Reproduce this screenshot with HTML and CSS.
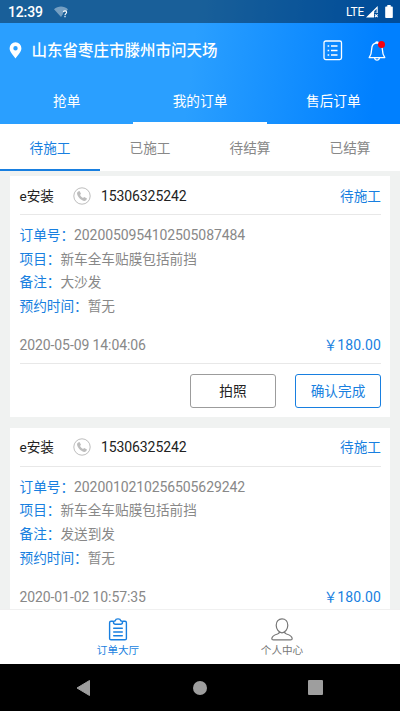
FILE: index.html
```html
<!DOCTYPE html>
<html lang="zh-CN">
<head>
<meta charset="utf-8">
<meta name="viewport" content="width=device-width, initial-scale=1">
<title>我的订单</title>
<link rel="stylesheet" href="styles.css">
</head>
<body>
<div class="app">
  <div class="top">
    <div class="status">
      <span class="clock">12:39</span>
      <svg class="wifi" width="15" height="13" viewBox="0 0 15 13"><path d="M0 3.2C4-.4 10-.4 14 3.2L12.2 5.4C10 4.4 8.6 5.6 9 8L7 11Z" fill="#fff" fill-opacity=".4"/><path d="M9.3 6.2c.2-1.7 3.3-1.8 3.3.1 0 1.3-1.6 1.3-1.6 2.9M11 10v1.3" fill="none" stroke="#fff" stroke-width="1.2"/></svg>
      <span class="lte">LTE</span>
      <svg class="signal" width="13" height="12" viewBox="0 0 13 12"><path d="M0 11.5 11.7 0v7H8v4.5Z" fill="#fff" /><path d="M8 5.4 10.6 2.8v4H8Z" fill="#0b569e"/><path d="m8.9 8.3 2.8 2.9m0-2.9-2.8 2.9" stroke="#fff" stroke-width="1.1"/></svg>
      <svg class="battery" width="8" height="14" viewBox="0 0 8 14"><path d="M2.3 0h3.4v1.5H7q.8 0 .8.8v9.9q0 .8-.8.8H1q-.8 0-.8-.8V2.3q0-.8.8-.8h1.3Z" fill="#fff"/></svg>
    </div>
    <div class="location">
      <svg class="pin" width="13" height="17" viewBox="0 0 12 17"><path fill-rule="evenodd" d="M6 .3A5.9 5.9 0 0 1 11.9 6.2C11.9 10 8.3 13.2 6 16.4 3.7 13.2.1 10 .1 6.2A5.9 5.9 0 0 1 6 .3ZM6 4A2.2 2.2 0 1 0 6 8.4 2.2 2.2 0 1 0 6 4Z" fill="#fff"/></svg>
      <h1>山东省枣庄市滕州市问天场</h1>
      <svg class="list" width="20" height="21" viewBox="0 0 20 21" fill="none" stroke="#fff" stroke-width="1.3"><rect x="1" y="1" width="17.5" height="18.6" rx="1.8"/><path d="M8 6h6.5M8 10.5h6.5M8 15h6.5M4.6 6h1.6M4.6 10.5h1.6M4.6 15h1.6"/></svg>
      <span class="bell">
        <svg width="18" height="20" viewBox="0 0 18 20" fill="none" stroke="#fff" stroke-width="1.3" stroke-linejoin="round"><path d="M9 2C5.6 2 3.8 4.7 3.7 8 3.6 12 3 14 1.2 16.6H16.8C15 14 14.4 12 14.3 8 14.2 4.7 12.4 2 9 2ZM7.6 2.1Q7.7.8 9 .8T10.4 2.1M6.6 17Q7 19.2 9 19.2T11.4 17"/></svg>
        <i></i>
      </span>
    </div>
    <nav class="tabs">
      <a>抢单</a><a class="on">我的订单</a><a>售后订单</a>
    </nav>
  </div>
  <nav class="filters">
    <a class="on">待施工</a><a>已施工</a><a>待结算</a><a>已结算</a>
  </nav>
  <main class="orders">
    <article class="card">
      <header class="head">
        <span class="name">e安装</span>
        <svg class="phone" width="18" height="18" viewBox="0 0 18 18"><circle cx="9" cy="9" r="8.2" fill="none" stroke="#bdbdbd"/><path d="M5.2 4.6 6.5 4 8 6.8 7 8Q8 10 10 11.1L11.2 10 14 11.6Q13.6 13.8 11.6 13.9C8 13.5 4.2 9.5 4 6.2Q4.1 5.2 5.2 4.6Z" fill="#bdbdbd"/></svg>
        <span class="num">15306325242</span>
        <span class="state">待施工</span>
      </header>
      <dl class="info">
        <div><dt>订单号：</dt><dd class="num">2020050954102505087484</dd></div>
        <div><dt>项目：</dt><dd>新车全车贴膜包括前挡</dd></div>
        <div><dt>备注：</dt><dd>大沙发</dd></div>
        <div><dt>预约时间：</dt><dd>暂无</dd></div>
      </dl>
      <div class="sum"><time class="num">2020-05-09 14:04:06</time><span class="price"><span>￥</span><span class="num">180.00</span></span></div>
      <div class="actions"><button>拍照</button><button class="primary">确认完成</button></div>
    </article>
    <article class="card">
      <header class="head">
        <span class="name">e安装</span>
        <svg class="phone" width="18" height="18" viewBox="0 0 18 18"><circle cx="9" cy="9" r="8.2" fill="none" stroke="#bdbdbd"/><path d="M5.2 4.6 6.5 4 8 6.8 7 8Q8 10 10 11.1L11.2 10 14 11.6Q13.6 13.8 11.6 13.9C8 13.5 4.2 9.5 4 6.2Q4.1 5.2 5.2 4.6Z" fill="#bdbdbd"/></svg>
        <span class="num">15306325242</span>
        <span class="state">待施工</span>
      </header>
      <dl class="info">
        <div><dt>订单号：</dt><dd class="num">2020010210256505629242</dd></div>
        <div><dt>项目：</dt><dd>新车全车贴膜包括前挡</dd></div>
        <div><dt>备注：</dt><dd>发送到发</dd></div>
        <div><dt>预约时间：</dt><dd>暂无</dd></div>
      </dl>
      <div class="sum"><time class="num">2020-01-02 10:57:35</time><span class="price"><span>￥</span><span class="num">180.00</span></span></div>
    </article>
  </main>
  <nav class="bottom">
    <a class="on">
      <svg width="20" height="23" viewBox="0 0 20 23" fill="none" stroke="currentColor" stroke-width="1.4" stroke-linejoin="round" stroke-linecap="round"><path d="M5 3.3H3Q1.6 3.3 1.6 4.7V20.4Q1.6 21.8 3 21.8H17Q18.4 21.8 18.4 20.4V4.7Q18.4 3.3 17 3.3H15M5.5 4.2Q5.5 3 7.2 2.8 7.6.9 10 .9T12.8 2.8Q14.5 3 14.5 4.2 14.5 6.2 12.5 6.2H7.5Q5.5 6.2 5.5 4.2ZM5.7 10.2h8.6M5.7 14h8.6M5.7 17.8h8.6"/></svg>
      <span>订单大厅</span>
    </a>
    <a>
      <svg width="22" height="23" viewBox="0 0 22 23" fill="none" stroke="currentColor" stroke-width="1.2" stroke-linejoin="round"><path d="M11 .9C14.5.9 16.8 3.5 16.8 7.2 16.8 11 14.2 14.8 11 14.8S5.2 11 5.2 7.2C5.2 3.5 7.5.9 11 .9ZM8.3 14Q8.5 15.2 6.5 16 1 17.6.8 20.7.8 21.7 2.5 21.9H19.5Q21.2 21.7 21.2 20.7 21 17.6 15.5 16 13.5 15.2 13.7 14"/></svg>
      <span>个人中心</span>
    </a>
  </nav>
  <div class="system">
    <svg width="15" height="16" viewBox="0 0 14 16"><path d="M.5 8 13 .5v15Z" fill="#9e9e9e" stroke="#9e9e9e" stroke-linejoin="round"/></svg>
    <i class="home"></i>
    <i class="recent"></i>
  </div>
</div>
</body>
</html>
```

FILE: styles.css
```css
* { box-sizing: border-box; }
body, h1, dl, dd { margin: 0; }
body {
  font-family: Roboto, "Noto Sans CJK SC", sans-serif;
  font-size: 13.65px;
  line-height: 20px;
  color: #222;
}
svg { display: block; flex: none; }
.app {
  width: 400px;
  height: 711px;
  display: flex;
  flex-direction: column;
  overflow: hidden;
  background: #f0f2f1;
}
.num { font-size: 14px; letter-spacing: -.1px; }

.top {
  flex: none;
  height: 124px;
  color: #fff;
  background: linear-gradient(97deg, #2a9fff 48%, #0080ff 93%);
}
.status {
  height: 23px;
  display: flex;
  align-items: center;
  padding: 0 7px 0 8px;
  background: rgba(0, 0, 0, .4);
}
.clock { font-size: 14px; font-weight: 500; letter-spacing: -.15px; padding-top: 1px; }
.wifi { margin: 1px 0 0 11px; }
.lte { margin-left: auto; font-size: 12px; letter-spacing: -.3px; }
.signal { margin-left: 2px; }
.battery { margin-left: 6px; }
.location { height: 55px; display: flex; align-items: center; padding: 0 14px 0 9px; }
.location h1 { margin-left: 9.5px; font-size: 15.5px; font-weight: 500; }
.list { margin-left: auto; }
.bell { position: relative; margin-left: 25px; }
.bell i {
  position: absolute;
  top: 0;
  right: 1px;
  width: 7px;
  height: 7px;
  border-radius: 50%;
  background: #f5000f;
}
.tabs { display: grid; grid-template-columns: repeat(3, 1fr); height: 46px; }
.tabs a { text-align: center; line-height: 46px; height: 46px; }
.tabs .on { border-bottom: 2px solid #fff; }

.filters {
  flex: none;
  display: grid;
  grid-template-columns: repeat(4, 1fr);
  height: 47px;
  background: #fff;
  color: #888;
}
.filters a { height: 47px; line-height: 48px; text-align: center; }
.filters .on { color: #187fe0; border-bottom: 2px solid #187fe0; }

.orders {
  flex: 1;
  min-height: 0;
  overflow: hidden;
  display: flex;
  flex-direction: column;
  gap: 11px;
  padding: 5px 10px 0;
}
.card { flex: none; background: #fff; padding: 0 9px 0 9.5px; }
.head { height: 39px; display: flex; align-items: center; padding-top: 1px; border-bottom: 1px solid #e8e8e8; }
.phone { margin: 0 10px 0 19px; }
.state { margin-left: auto; color: #187fe0; }
.info { padding-top: 9px; color: #888; }
.info div { display: flex; height: 23.7px; line-height: 23.7px; }
.info dt { color: #187fe0; }
.sum {
  display: flex;
  justify-content: space-between;
  align-items: center;
  height: 45px;
  padding-top: 8.5px;
  color: #888;
  border-bottom: 1px solid #e8e8e8;
}
.price { display: flex; color: #187fe0; }
.price .num { letter-spacing: .1px; }
.actions { display: flex; justify-content: flex-end; gap: 19px; padding: 10px 0 8.8px; }
.actions button {
  width: 86px;
  height: 34px;
  padding: 0;
  font: inherit;
  color: #222;
  background: #fff;
  border: 1px solid #9c9c9c;
  border-radius: 3px;
}
.actions .primary { color: #187fe0; border-color: #187fe0; }

.bottom {
  flex: none;
  height: 55px;
  display: flex;
  justify-content: space-around;
  padding: 8px 36px 0;
  background: #fff;
  border-top: 1px solid #f0f0f0;
  color: #777;
  font-size: 10.6px;
}
.bottom a { display: flex; flex-direction: column; align-items: center; }
.bottom .on { color: #187fe0; }
.system {
  flex: none;
  height: 47px;
  display: flex;
  justify-content: space-between;
  align-items: center;
  padding: 0 77px 0 76px;
  background: #000;
}
.home { width: 14px; height: 14px; border-radius: 50%; background: #9e9e9e; }
.recent { width: 15px; height: 15px; border-radius: 1px; background: #9e9e9e; }
```
